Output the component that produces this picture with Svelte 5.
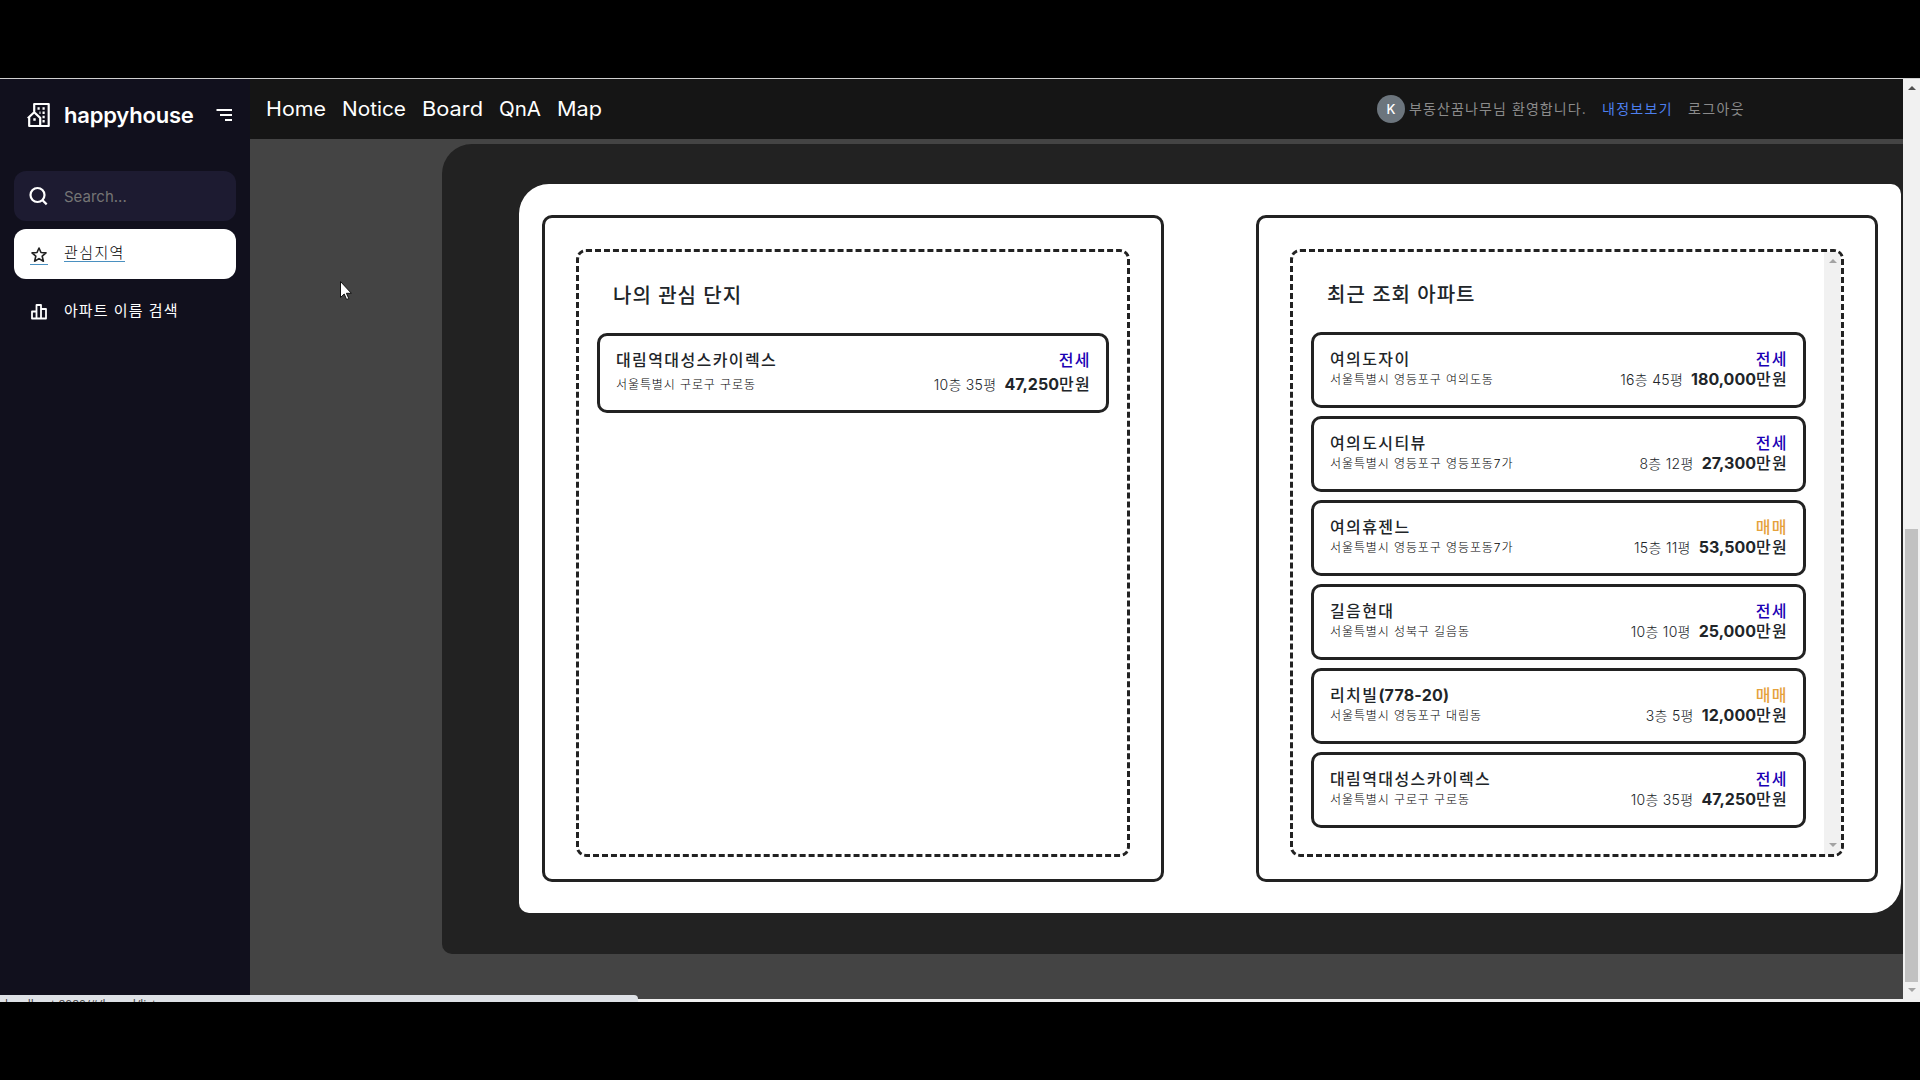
<script>
  const nav = [
    { label: 'Home', w: 60 },
    { label: 'Notice', w: 64 },
    { label: 'Board', w: 61 },
    { label: 'QnA', w: 42 },
    { label: 'Map', w: 45 }
  ];
  const favorites = [
    { name: '대림역대성스카이렉스', addr: '서울특별시 구로구 구로동', kind: '전세', spec: '10층 35평', price: '47,250' }
  ];
  const recent = [
    { name: '여의도자이', addr: '서울특별시 영등포구 여의도동', kind: '전세', spec: '16층 45평', price: '180,000' },
    { name: '여의도시티뷰', addr: '서울특별시 영등포구 영등포동7가', kind: '전세', spec: '8층 12평', price: '27,300' },
    { name: '여의휴젠느', addr: '서울특별시 영등포구 영등포동7가', kind: '매매', spec: '15층 11평', price: '53,500' },
    { name: '길음현대', addr: '서울특별시 성북구 길음동', kind: '전세', spec: '10층 10평', price: '25,000' },
    { name: '리치빌', suffix: '(778-20)', addr: '서울특별시 영등포구 대림동', kind: '매매', spec: '3층 5평', price: '12,000' },
    { name: '대림역대성스카이렉스', addr: '서울특별시 구로구 구로동', kind: '전세', spec: '10층 35평', price: '47,250' }
  ];
</script>

{#snippet card(item)}
  <article class="card">
    <div class="row">
      <span class="name">{item.name}{#if item.suffix}<b class="suffix">{item.suffix}</b>{/if}</span>
      <span class="kind" class:sale={item.kind === '매매'}>{item.kind}</span>
    </div>
    <div class="row second">
      <span class="addr">{item.addr}</span>
      <span class="deal"><span class="spec">{item.spec}</span><span class="price"><b>{item.price}</b>만원</span></span>
    </div>
  </article>
{/snippet}

<div class="screen">
  <div class="window">
    <aside>
      <div class="brand">
        <svg class="logo" width="24" height="26" viewBox="0 0 24 26" fill="none" stroke="#fff" stroke-width="2.200" stroke-linejoin="round">
          <path d="M7.200 9.500V2h14.500v22H2.200v-9M0.800 16.300L7.200 10.200l6 5.700V24" />
          <path d="M10.500 6.500h2.200M15.500 6.500h2.200M12.500 10.800h1M15.500 10.800h2.200M15.500 15h2.200M15.500 19.300h2.200M6.300 17.500h2.400" stroke-width="2.400" />
        </svg>
        <span class="brand-name">happyhouse</span>
        <svg class="menu" width="17" height="14" viewBox="0 0 17 14" stroke="#fff" stroke-width="2.200"><path d="M0.500 2h15.500M4 7h12M9 12h7" /></svg>
      </div>
      <div class="search">
        <svg width="20" height="20" viewBox="0 0 20 20" fill="none" stroke="#fff" stroke-width="2.200"><circle cx="8.500" cy="9" r="7" /><path d="M13.300 14l4.400 4.400" /></svg>
        <span>Search...</span>
      </div>
      <div class="item active">
        <span class="star"><svg width="18" height="18" viewBox="0 0 18 18" fill="none" stroke="#222" stroke-width="1.600" stroke-linejoin="round"><path d="M9 3l2 4.500 5 .4-3.800 3.300 1.200 5L9 13.600 4.600 16.200l1.200-5L2 7.900l5-.4z" /></svg></span>
        <span class="label">관심지역</span>
      </div>
      <div class="item">
        <svg width="18" height="16" viewBox="0 0 18 16" fill="none" stroke="#fff" stroke-width="1.800" stroke-linejoin="round"><path d="M5.500 14.500V1h4.500v13.500M5.500 7.500H1V14.500h14V5h-5" /></svg>
        <span class="label">아파트 이름 검색</span>
      </div>
    </aside>
    <div class="main">
      <header>
        <nav>
          {#each nav as n}
            <svg class="nav-link" width={n.w} height="30"><text x="0" y="21" textLength={n.w} lengthAdjust="spacingAndGlyphs">{n.label}</text></svg>
          {/each}
        </nav>
        <div class="user">
          <span class="avatar">K</span>
          <span class="hello">부동산꿈나무님 환영합니다.</span>
          <span class="mine">내정보보기</span>
          <span class="logout">로그아웃</span>
        </div>
      </header>
      <section class="stage">
        <div class="dark">
          <div class="sheet">
            <div class="panel">
              <div class="dashed">
                <div class="list fav">
                  <h2>나의 관심 단지</h2>
                  {#each favorites as f}{@render card(f)}{/each}
                </div>
              </div>
            </div>
            <div class="panel">
              <div class="dashed">
                <div class="list">
                  <h2>최근 조회 아파트</h2>
                  {#each recent as r}{@render card(r)}{/each}
                </div>
                <div class="inner-bar"><i class="up"></i><i class="down"></i></div>
              </div>
            </div>
          </div>
        </div>
      </section>
    </div>
    <div class="page-bar"><i class="up"></i><div class="thumb"></div><i class="down"></i></div>
    <div class="status">localhost:8080/#/board/list</div>
    <svg class="cursor" width="12" height="19" viewBox="0 0 12 19"><path d="M.5.500v16l3.700-3.500 2.400 5.500 2.200-1-2.400-5.200h5z" fill="#fff" stroke="#111" /></svg>
  </div>
</div>

<style>
  :global(body) { margin: 0; background: #000; overflow: hidden; }
  .screen {
    box-sizing: border-box; width: 1920px; height: 1080px; padding: 78px 0;
    background: #000; overflow: hidden;
    font-family: Inter, "Noto Sans CJK KR", sans-serif; color: #212529;
  }
  .window {
    position: relative; box-sizing: border-box; display: flex; height: 924px; width: 1920px;
    border-top: 1px solid #d0d0d0; padding-bottom: 3px; overflow: hidden; background: #f0f0f0;
  }
  aside { width: 250px; flex: none; background: #11101d; box-sizing: border-box; padding: 0 14px; color: #fff; }
  .brand { display: flex; height: 92px; align-items: center; padding: 0 3px 20px 13px; box-sizing: border-box; }
  .brand-name { width: 130px; margin: 0 22px 0 13px; font-weight: 600; font-size: 22px; letter-spacing: -0.2px; line-height: 30px; }
  .search, .item { display: flex; align-items: center; height: 50px; border-radius: 12px; box-sizing: border-box; padding-left: 15px; }
  .search { background: #1d1b31; color: #757575; font-size: 15px; gap: 15px; }
  .item { margin-top: 8px; padding-left: 17px; gap: 15px; font-size: 15px; }
  .active { background: #fff; color: #000; }
  .star { border-bottom: 1px solid #4a90c0; height: 19px; margin: 1px 0 0 -1px; }
  .label { line-height: 18px; letter-spacing: 1.05px; margin: 0 0 2px 0; }
  .active .label { border-bottom: 1px solid #4a90c0; line-height: 17px; margin: 0 0 2px 1px; font-weight: 300; letter-spacing: 1.4px; }

  .main { width: 1653px; flex: none; overflow: hidden; background: #444; }
  header { display: flex; justify-content: space-between; height: 60px; background: #151515; box-sizing: border-box; padding-left: 16px; }
  nav { display: flex; gap: 16px; padding-top: 16px; }
  .nav-link { overflow: visible; }
  .nav-link text { fill: #fff; font-size: 20px; }
  .user { display: flex; align-items: center; width: 526px; height: 60px; font-size: 14px; color: #8b8b8b; white-space: nowrap; letter-spacing: 1.1px; }
  .avatar { width: 28px; height: 28px; border-radius: 50%; background: #6c757d; color: #fff; font-size: 13px; font-weight: 500; display: flex; align-items: center; justify-content: center; letter-spacing: 0; }
  .hello, .mine, .logout { margin-bottom: 2px; }
  .hello { margin-left: 4px; width: 177px; }
  .mine { margin-left: 16px; color: #4d7fee; width: 70px; letter-spacing: 1.3px; }
  .logout { margin-left: 16px; letter-spacing: 1.4px; }

  .stage { padding: 5px 0 0 192px; }
  .dark { width: 1500px; height: 810px; box-sizing: border-box; padding: 40px 0 0 77px; background: #222; border-radius: 30px 10px 30px 10px; }
  .sheet { width: 1382px; height: 729px; background: #fff; box-sizing: border-box; border-radius: 30px 10px 30px 10px; padding: 31px 23px; display: flex; justify-content: space-between; }
  .panel { width: 622px; height: 667px; box-sizing: border-box; border: 3px solid #222; border-radius: 10px; padding: 31px 31px 22px; }
  .dashed { display: flex; height: 608px; box-sizing: border-box; border: 3px dashed #222; border-radius: 10px; overflow: hidden; }
  .list { flex: 1; padding: 0 18px; min-width: 0; }
  h2 { margin: 0; height: 80px; box-sizing: border-box; padding: 29px 0 0 16px; font-size: 20px; line-height: 28px; font-weight: 500; letter-spacing: 1px; }
  .card { box-sizing: border-box; height: 76px; margin-bottom: 8px; border: 3px solid #222; border-radius: 10px; padding: 14px 16px 0; }
  .row { display: flex; justify-content: space-between; height: 20px; line-height: 20px; white-space: nowrap; }
  .name, .kind { font-size: 16px; font-weight: 500; letter-spacing: 1.4px; }
  .kind { color: #1a00b4; margin-right: -1px; }
  .kind.sale { color: #e5a23c; }
  .addr { font-size: 12px; font-weight: 300; letter-spacing: 0.9px; color: #000; padding-top: 1px; }
  .spec { font-size: 14px; font-weight: 300; letter-spacing: 0.3px; margin-right: 8px; }
  .price { font-size: 16px; font-weight: 500; letter-spacing: 1.3px; margin-right: -1px; }
  .price b { font-weight: 700; font-size: 16px; letter-spacing: 0; }
  .suffix { font-weight: 700; font-size: 16px; letter-spacing: 0.2px; }
  .fav h2 { padding-top: 30px; height: 81px; }
  .fav .card { height: 80px; }
  .fav .second { padding-top: 4px; }
  .inner-bar, .page-bar { background: #f1f1f1; display: flex; flex-direction: column; justify-content: space-between; align-items: center; box-sizing: border-box; }
  .inner-bar { width: 17px; padding: 7px 0; }
  .page-bar { width: 17px; height: 920px; padding: 7px 0; }
  .thumb { width: 13px; height: 453px; background: #c1c1c1; margin-top: 432px; }
  i { width: 0; height: 0; border: 4px solid transparent; }
  .up { border-top: 0; border-bottom-color: #a3a3a3; }
  .page-bar .up { border-bottom-color: #505050; }
  .down { border-bottom: 0; border-top-color: #a3a3a3; }
  .status { position: absolute; left: 0; bottom: 0; width: 638px; height: 7px; overflow: hidden; background: #dee1e6; border-radius: 0 4px 0 0; font-family: "Open Sans", sans-serif; font-size: 12px; line-height: 19px; color: #444; box-sizing: border-box; padding-left: 5px; }
  .cursor { position: absolute; left: 340px; top: 202px; }
</style>
